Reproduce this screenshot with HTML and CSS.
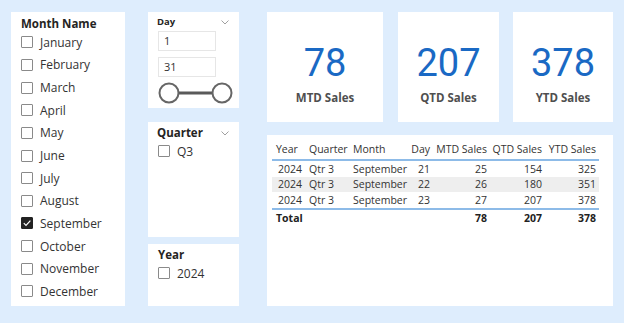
FILE: index.html
```html
<!DOCTYPE html>
<html lang="en">
<head>
    <meta charset="UTF-8">
    <title>Sales Report</title>
    <link rel="stylesheet" href="styles.css">
</head>
<body>
    <div class="report">
        <div class="panel months">
            <div class="slicer-title">Month Name</div>
            <div class="item"><span class="box"></span>January</div>
            <div class="item"><span class="box"></span>February</div>
            <div class="item"><span class="box"></span>March</div>
            <div class="item"><span class="box"></span>April</div>
            <div class="item"><span class="box"></span>May</div>
            <div class="item"><span class="box"></span>June</div>
            <div class="item"><span class="box"></span>July</div>
            <div class="item"><span class="box"></span>August</div>
            <div class="item"><span class="box checked"><svg width="10" height="10" viewBox="0 0 10 10"><path d="M1.8 5.2 L4 7.4 L8.4 2.6" fill="none" stroke="#fff" stroke-width="1.2"/></svg></span>September</div>
            <div class="item"><span class="box"></span>October</div>
            <div class="item"><span class="box"></span>November</div>
            <div class="item"><span class="box"></span>December</div>
        </div>

        <div class="middle">
            <div class="panel day">
                <div class="head">
                    <span class="small-title">Day</span>
                    <svg class="chevron" width="8" height="5" viewBox="0 0 8 5"><path d="M0.5 0.5 L4 4 L7.5 0.5" fill="none" stroke="#a0a0a0" stroke-width="1"/></svg>
                </div>
                <div class="range-input">1</div>
                <div class="range-input">31</div>
                <svg class="slider" width="78" height="24" viewBox="0 0 78 24">
                    <line x1="20" y1="12" x2="56" y2="12" stroke="#5a5a5a" stroke-width="3"/>
                    <circle cx="11" cy="12" r="9.5" fill="#fff" stroke="#666" stroke-width="2"/>
                    <circle cx="64" cy="12" r="9.5" fill="#fff" stroke="#666" stroke-width="2"/>
                </svg>
            </div>

            <div class="panel quarter">
                <div class="head">
                    <span class="slicer-title">Quarter</span>
                    <svg class="chevron" width="8" height="5" viewBox="0 0 8 5"><path d="M0.5 0.5 L4 4 L7.5 0.5" fill="none" stroke="#a0a0a0" stroke-width="1"/></svg>
                </div>
                <div class="item"><span class="box"></span>Q3</div>
            </div>

            <div class="panel year">
                <div class="slicer-title">Year</div>
                <div class="item"><span class="box"></span>2024</div>
            </div>
        </div>

        <div class="right">
            <div class="cards">
                <div class="panel card mtd">
                    <div class="value">78</div>
                    <div class="label">MTD Sales</div>
                </div>
                <div class="panel card qtd">
                    <div class="value">207</div>
                    <div class="label">QTD Sales</div>
                </div>
                <div class="panel card ytd">
                    <div class="value">378</div>
                    <div class="label">YTD Sales</div>
                </div>
            </div>

            <div class="panel table-panel">
                <table class="sales">
                    <colgroup>
                        <col class="c-year"><col class="c-qtr"><col class="c-month"><col class="c-day">
                        <col class="c-mtd"><col class="c-qtd"><col class="c-ytd">
                    </colgroup>
                    <thead>
                        <tr>
                            <th>Year</th><th>Quarter</th><th>Month</th><th class="num">Day</th>
                            <th class="num">MTD Sales</th><th class="num">QTD Sales</th><th class="num">YTD Sales</th>
                        </tr>
                    </thead>
                    <tbody>
                        <tr>
                            <td class="num">2024</td><td>Qtr 3</td><td>September</td><td class="num">21</td>
                            <td class="num">25</td><td class="num">154</td><td class="num">325</td>
                        </tr>
                        <tr class="alt">
                            <td class="num">2024</td><td>Qtr 3</td><td>September</td><td class="num">22</td>
                            <td class="num">26</td><td class="num">180</td><td class="num">351</td>
                        </tr>
                        <tr>
                            <td class="num">2024</td><td>Qtr 3</td><td>September</td><td class="num">23</td>
                            <td class="num">27</td><td class="num">207</td><td class="num">378</td>
                        </tr>
                    </tbody>
                    <tfoot>
                        <tr>
                            <td class="total">Total</td><td></td><td></td><td></td>
                            <td class="num">78</td><td class="num">207</td><td class="num">378</td>
                        </tr>
                    </tfoot>
                </table>
            </div>
        </div>
    </div>
</body>
</html>
```

FILE: styles.css
```css
body {
    margin: 0;
    background-color: #deedfd;
    font-family: "Open Sans", "Noto Sans", sans-serif;
    color: #252423;
}
.report {
    display: flex;
    padding: 12px 0 0 11px;
}
.panel {
    background-color: #fff;
    box-sizing: border-box;
}
.slicer-title {
    font-size: 11.5px;
    font-weight: bold;
    line-height: 14px;
}
.item {
    display: flex;
    align-items: center;
    height: 22.65px;
    font-size: 12px;
    color: #333;
}
.box {
    display: inline-flex;
    align-items: center;
    justify-content: center;
    width: 12px;
    height: 12px;
    box-sizing: border-box;
    border: 1px solid #8a8a8a;
    border-radius: 1px;
    margin-right: 7px;
}
.box.checked {
    background-color: #222;
    border-color: #222;
}

/* month slicer */
.months {
    width: 114px;
    height: 294px;
    padding: 5px 0 0 10px;
}

/* middle column */
.middle {
    display: flex;
    flex-direction: column;
    width: 91px;
    margin-left: 23px;
}
.head {
    display: flex;
    justify-content: space-between;
    align-items: center;
    padding-right: 10px;
}
.chevron {
    display: block;
}
.day {
    height: 96px;
    padding: 3px 0 0 9px;
}
.small-title {
    font-size: 9.5px;
    font-weight: bold;
    line-height: 14px;
}
.range-input {
    width: 58px;
    height: 20px;
    box-sizing: border-box;
    border: 1px solid #e6e6e6;
    margin: 2px 0 0 1px;
    padding-left: 5px;
    font-size: 11px;
    line-height: 18px;
    color: #333;
}
.range-input + .range-input {
    margin-top: 6px;
}
.slider {
    display: block;
    margin: 4px 0 0 1px;
}
.quarter {
    height: 115px;
    margin-top: 14px;
    padding: 4px 0 0 9px;
}
.quarter .item {
    padding-left: 1px;
}
.year {
    height: 62px;
    margin-top: 7px;
    padding: 4px 0 0 10px;
}

/* right column */
.right {
    margin-left: 28px;
    width: 346px;
}
.cards {
    display: flex;
}
.card {
    height: 110px;
    padding-top: 30px;
    text-align: center;
}
.mtd {
    width: 116px;
}
.qtd {
    width: 101px;
    margin-left: 15px;
}
.ytd {
    width: 100px;
    margin-left: 14px;
}
.value {
    font-family: Roboto, sans-serif;
    font-size: 38px;
    line-height: 42px;
    color: #1a69c4;
}
.label {
    margin-top: 6px;
    font-size: 11.5px;
    font-weight: bold;
    line-height: 16px;
    color: #4f4f4f;
}
.table-panel {
    height: 171px;
    margin-top: 13px;
    padding: 4px 0 0 5px;
}
.sales {
    border-collapse: collapse;
    table-layout: fixed;
    width: 327px;
    font-size: 10.5px;
    color: #333;
}
.c-year { width: 33px; }
.c-qtr { width: 44px; }
.c-month { width: 56px; }
.c-day { width: 28px; }
.c-mtd { width: 57px; }
.c-qtd { width: 55px; }
.c-ytd { width: 54px; }
.sales th {
    font-weight: normal;
    text-align: left;
    height: 20px;
    padding: 0 0 0 4px;
    white-space: nowrap;
    border-bottom: 2px solid #8dbbe8;
}
.sales td {
    height: 15.5px;
    padding: 0 0 0 4px;
    white-space: nowrap;
}
.sales .num {
    text-align: right;
    padding: 0 3px 0 0;
}
.sales tr.alt td {
    background-color: #eeeeee;
}
.sales tfoot td {
    height: 16px;
    font-weight: bold;
    color: #222;
    border-top: 2px solid #8dbbe8;
}
```
